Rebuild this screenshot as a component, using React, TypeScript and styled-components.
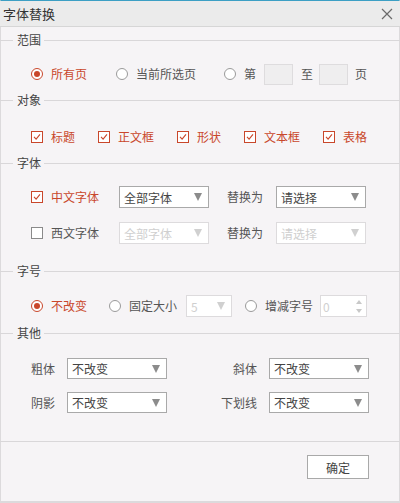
import React from "react";
import styled, { createGlobalStyle } from "styled-components";

const RED = "#c9472b";

const Global = createGlobalStyle`
  html, body { margin: 0; padding: 0; background: #f6f4f6; }
  body { font-family: "Noto Sans CJK SC", "Noto Sans", sans-serif; font-size: 12px; color: #555; }
`;

const Window = styled.div`
  width: 400px;
  height: 503px;
  box-sizing: border-box;
  border-top: 1px solid #3c9fc4;
  border-left: 1px solid #dcdadc;
  border-right: 1px solid #dcdadc;
  border-bottom: 2px solid #dcdadc;
  background: #f6f4f6;
  display: flex;
  flex-direction: column;
`;

const TitleBar = styled.div`
  height: 25px;
  background: #ebebeb;
  border-bottom: 1px solid #d6d6d6;
  display: flex;
  align-items: center;
  justify-content: space-between;
  padding: 0 7px 0 3px;
  margin: 0 -1px;
`;

const Title = styled.div`
  font-size: 13px;
  color: #333;
  line-height: 25px;
`;

const Close = styled.svg`
  width: 12px;
  height: 12px;
`;

const Content = styled.div`
  display: flex;
  flex-direction: column;
  padding-top: 6px;
  flex: 1;
`;

const Legend = styled.div`
  display: flex;
  align-items: center;
  height: 14px;
  margin: 0 -1px;
  &::before {
    content: "";
    width: 13px;
    border-top: 1px solid #d9d7d9;
  }
  &::after {
    content: "";
    flex: 1;
    border-top: 1px solid #d9d7d9;
  }
`;

const LegendText = styled.span`
  padding: 0 3px 0 4px;
  color: #444;
  font-size: 12px;
  line-height: 14px;
`;

const SectionBody = styled.div<{ $top: number; $bottom: number; $gap?: number }>`
  padding: ${(p) => p.$top}px 0 ${(p) => p.$bottom}px 30px;
  display: flex;
  flex-direction: column;
  gap: ${(p) => p.$gap ?? 0}px;
`;

const Row = styled.div<{ $gap?: number }>`
  display: flex;
  align-items: center;
  height: 22px;
  gap: ${(p) => p.$gap ?? 0}px;
`;

const Item = styled.label<{ $on?: boolean; $ml?: number }>`
  display: flex;
  align-items: center;
  gap: 8px;
  color: ${(p) => (p.$on ? RED : "#555")};
  margin-left: ${(p) => p.$ml ?? 0}px;
  white-space: nowrap;
  line-height: 14px;
`;

const RadioCircle = styled.span<{ $on?: boolean }>`
  width: 12px;
  height: 12px;
  box-sizing: border-box;
  border-radius: 50%;
  border: 1px solid ${(p) => (p.$on ? RED : "#9a9a9a")};
  background: #fff;
  display: flex;
  align-items: center;
  justify-content: center;
  flex: none;
  &::after {
    content: "";
    width: 6px;
    height: 6px;
    border-radius: 50%;
    background: ${(p) => (p.$on ? RED : "transparent")};
  }
`;

const CheckBox = styled.span<{ $on?: boolean }>`
  width: 12px;
  height: 12px;
  box-sizing: border-box;
  border: 1px solid ${(p) => (p.$on ? RED : "#8a8a8a")};
  background: #fff;
  display: flex;
  align-items: center;
  justify-content: center;
  flex: none;
`;

const Radio = ({ on, label, ml }: { on?: boolean; label: string; ml?: number }) => (
  <Item $on={on} $ml={ml}>
    <RadioCircle $on={on} />
    {label}
  </Item>
);

const Check = ({ on, label, ml }: { on?: boolean; label: string; ml?: number }) => (
  <Item $on={on} $ml={ml}>
    <CheckBox $on={on}>
      {on && (
        <svg width="8" height="8" viewBox="0 0 8 8">
          <path d="M1 3.9 L3.1 6.2 L7 1.3" fill="none" stroke={RED} strokeWidth="1.1" />
        </svg>
      )}
    </CheckBox>
    {label}
  </Item>
);

const Text = styled.span<{ $ml?: number; $right?: boolean }>`
  color: #555;
  margin-left: ${(p) => p.$ml ?? 0}px;
  text-align: ${(p) => (p.$right ? "right" : "left")};
  white-space: nowrap;
  line-height: 14px;
`;

const PageBox = styled.div<{ $ml?: number }>`
  width: 29px;
  height: 21px;
  box-sizing: border-box;
  border: 1px solid #dedcde;
  background: #efeeef;
  margin-left: ${(p) => p.$ml ?? 0}px;
`;

const SelectBox = styled.div<{ $w: number; $ml?: number; $disabled?: boolean; $h?: number }>`
  width: ${(p) => p.$w}px;
  height: ${(p) => p.$h ?? 22}px;
  box-sizing: border-box;
  border: 1px solid ${(p) => (p.$disabled ? "#dddbdd" : "#a9a9a9")};
  background: #fff;
  margin-left: ${(p) => p.$ml ?? 0}px;
  display: flex;
  align-items: center;
  justify-content: space-between;
  padding: 0 6px 0 4px;
  color: ${(p) => (p.$disabled ? "#cfcfcf" : "#444")};
  font-size: 12px;
  flex: none;
`;

const Arrow = styled.span<{ $disabled?: boolean }>`
  width: 0;
  height: 0;
  border-left: 4.5px solid transparent;
  border-right: 4.5px solid transparent;
  border-top: 8px solid ${(p) => (p.$disabled ? "#d0d0d0" : "#8c8c8c")};
`;

const Select = ({ w, ml, value, disabled, h }: { w: number; ml?: number; value: string; disabled?: boolean; h?: number }) => (
  <SelectBox $w={w} $ml={ml} $disabled={disabled} $h={h}>
    <span>{value}</span>
    <Arrow $disabled={disabled} />
  </SelectBox>
);

const Spinner = styled.div<{ $ml?: number }>`
  width: 47px;
  height: 22px;
  box-sizing: border-box;
  border: 1px solid #dddbdd;
  background: #fff;
  margin-left: ${(p) => p.$ml ?? 0}px;
  display: flex;
  align-items: center;
  justify-content: space-between;
  padding: 0 4px 0 2px;
  color: #d0d0d0;
`;

const SpinArrows = styled.div`
  display: flex;
  flex-direction: column;
  gap: 5px;
`;

const Tri = styled.span<{ $up?: boolean }>`
  width: 0;
  height: 0;
  border-left: 3px solid transparent;
  border-right: 3px solid transparent;
  ${(p) => (p.$up ? "border-bottom: 4px solid #c8c8c8;" : "border-top: 4px solid #c8c8c8;")}
`;

const OtherGrid = styled.div`
  display: grid;
  grid-template-columns: 24px 100px 78px 100px;
  column-gap: 12px;
  row-gap: 13px;
  align-items: center;
`;

const Footer = styled.div`
  border-top: 1px solid #d9d7d9;
  margin: 0 -1px;
  flex: 1;
  display: flex;
  justify-content: flex-end;
  align-items: flex-start;
  padding: 13px 31px 0 0;
`;

const Button = styled.button`
  width: 62px;
  height: 24px;
  border: 1px solid #a9a9a9;
  background: #fff;
  color: #444;
  font-family: inherit;
  font-size: 12px;
  padding: 0;
`;

export default function App() {
  return (
    <>
      <Global />
      <Window>
        <TitleBar>
          <Title>字体替换</Title>
          <Close viewBox="0 0 12 12">
            <path d="M1 1 L11 11 M11 1 L1 11" stroke="#6a6a6a" strokeWidth="1.2" />
          </Close>
        </TitleBar>
        <Content>
          <Legend><LegendText>范围</LegendText></Legend>
          <SectionBody $top={16} $bottom={8}>
            <Row>
              <Radio on label="所有页" />
              <Radio label="当前所选页" ml={29} />
              <Radio label="第" ml={28} />
              <PageBox $ml={8} />
              <Text $ml={8}>至</Text>
              <PageBox $ml={6} />
              <Text $ml={7}>页</Text>
            </Row>
          </SectionBody>

          <Legend><LegendText>对象</LegendText></Legend>
          <SectionBody $top={19} $bottom={8}>
            <Row $gap={23}>
              <Check on label="标题" />
              <Check on label="正文框" />
              <Check on label="形状" />
              <Check on label="文本框" />
              <Check on label="表格" />
            </Row>
          </SectionBody>

          <Legend><LegendText>字体</LegendText></Legend>
          <SectionBody $top={16} $bottom={20} $gap={14}>
            <Row>
              <Check on label="中文字体" />
              <Select w={90} ml={20} value="全部字体" />
              <Text $ml={18}>替换为</Text>
              <Select w={90} ml={13} value="请选择" />
            </Row>
            <Row>
              <Check label="西文字体" />
              <Select w={90} ml={20} value="全部字体" disabled />
              <Text $ml={18}>替换为</Text>
              <Select w={90} ml={13} value="请选择" disabled />
            </Row>
          </SectionBody>

          <Legend><LegendText>字号</LegendText></Legend>
          <SectionBody $top={17} $bottom={9}>
            <Row>
              <Radio on label="不改变" />
              <Radio label="固定大小" ml={22} />
              <Select w={46} ml={9} value="5" disabled />
              <Radio label="增减字号" ml={13} />
              <Spinner $ml={7}>
                <span>0</span>
                <SpinArrows>
                  <Tri $up />
                  <Tri />
                </SpinArrows>
              </Spinner>
            </Row>
          </SectionBody>

          <Legend><LegendText>其他</LegendText></Legend>
          <SectionBody $top={18} $bottom={28}>
            <OtherGrid>
              <Text>粗体</Text>
              <Select w={100} value="不改变" h={21} />
              <Text $right>斜体</Text>
              <Select w={100} value="不改变" h={21} />
              <Text>阴影</Text>
              <Select w={100} value="不改变" h={21} />
              <Text $right>下划线</Text>
              <Select w={100} value="不改变" h={21} />
            </OtherGrid>
          </SectionBody>

          <Footer>
            <Button>确定</Button>
          </Footer>
        </Content>
      </Window>
    </>
  );
}
